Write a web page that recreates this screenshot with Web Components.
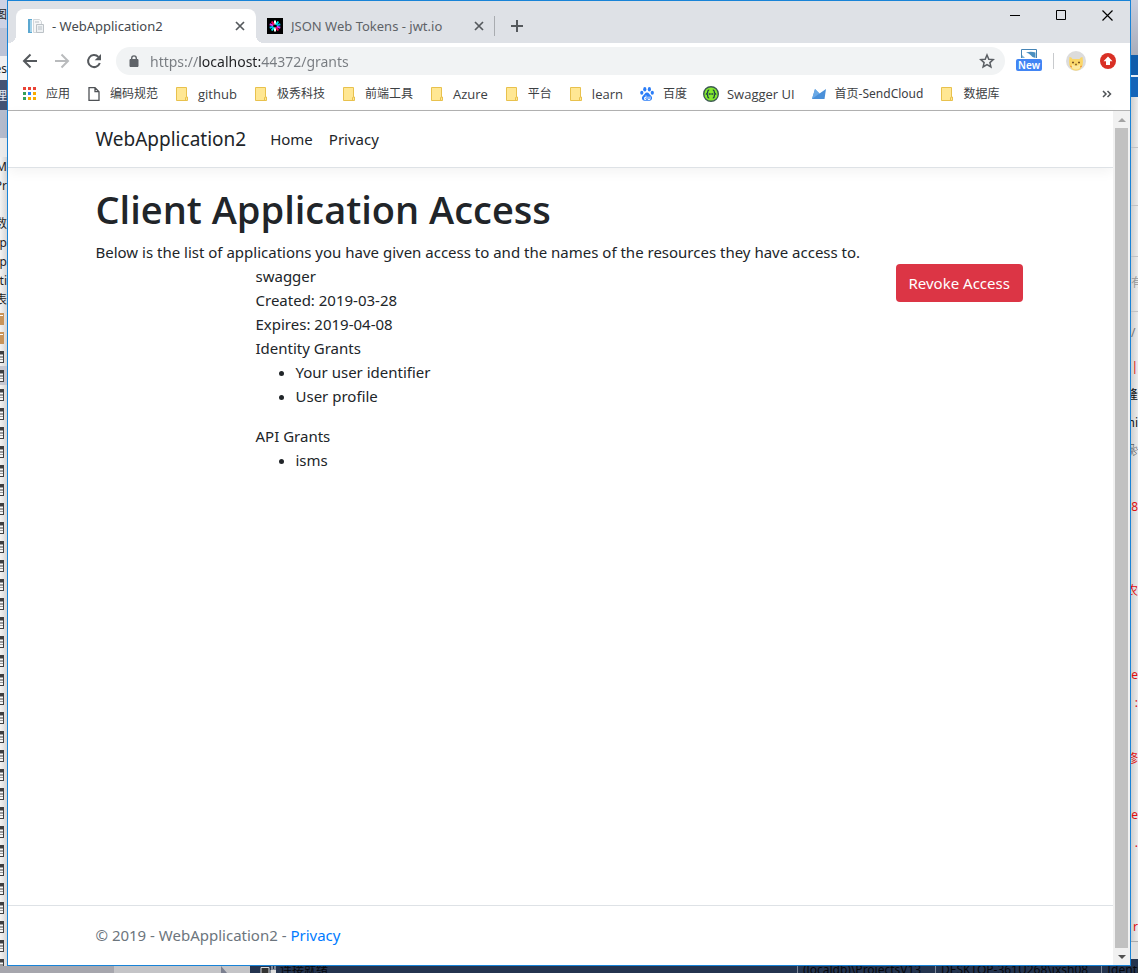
<!DOCTYPE html>
<html lang="en">
<head>
<meta charset="utf-8">
<title>- WebApplication2</title>
<style>
  html, body { margin: 0; }
  body {
    font-family: "Noto Sans", "Noto Sans CJK SC", sans-serif;
    color: #212529;
  }
</style>
</head>
<body>
<desk-top>
  <side-tree slot="left"></side-tree>
  <browser-window>
    <tab-strip slot="tabs">
      <browser-tab icon="doc" active>- WebApplication2</browser-tab>
      <browser-tab icon="jwt">JSON Web Tokens - jwt.io</browser-tab>
    </tab-strip>
    <address-bar slot="address"></address-bar>
    <bookmark-bar slot="bookmarks">
      <book-mark icon="apps">应用</book-mark>
      <book-mark icon="page">编码规范</book-mark>
      <book-mark icon="folder" latin>github</book-mark>
      <book-mark icon="folder">极秀科技</book-mark>
      <book-mark icon="folder">前端工具</book-mark>
      <book-mark icon="folder" latin>Azure</book-mark>
      <book-mark icon="folder">平台</book-mark>
      <book-mark icon="folder" latin>learn</book-mark>
      <book-mark icon="paw">百度</book-mark>
      <book-mark icon="swagger" latin>Swagger UI</book-mark>
      <book-mark icon="send">首页-SendCloud</book-mark>
      <book-mark icon="folder">数据库</book-mark>
    </bookmark-bar>
    <site-nav></site-nav>
    <client-access>
      <grant-card name="swagger" created="2019-03-28" expires="2019-04-08">
        <grant-list label="Identity Grants" items="Your user identifier|User profile"></grant-list>
        <grant-list label="API Grants" items="isms"></grant-list>
      </grant-card>
    </client-access>
    <site-footer></site-footer>
  </browser-window>
  <side-editor slot="right"></side-editor>
  <status-strip slot="bottom"></status-strip>
</desk-top>

<script>
const ICONS = {
  doc: `<svg width="16" height="16" viewBox="0 0 16 16"><path d="M0 1h4v14H0z" fill="#5ba7d0"/><path d="M2 2h2v12H2z" fill="#a5d3ea"/><path d="M5.500 1.500h6l2 2v11h-8z" fill="#f6f7f8" stroke="#d3d7da"/><path d="M8.500 6.500h7v8h-7z" fill="#eef1f3" stroke="#bcc2c7"/><path d="M7 4h4M10 9h4M10 11h4" stroke="#b9c0c6"/></svg>`,
  jwt: `<svg width="16" height="16" viewBox="0 0 16 16"><path d="M0 0h16v16H0z" fill="#000"/><g stroke-width="2"><path d="M8 2.500v4" stroke="#fff"/><path d="M8 9.500v4" stroke="#fff"/><path d="M11.300 3.500 9 6.600" stroke="#00f2e6"/><path d="M4.700 12.500 7 9.400" stroke="#00f2e6"/><path d="M13.300 6.300 9.700 7.400" stroke="#00b9f1"/><path d="M2.700 9.700 6.300 8.600" stroke="#00b9f1"/><path d="M13.300 9.700 9.700 8.600" stroke="#d63aff"/><path d="M2.700 6.300 6.300 7.400" stroke="#d63aff"/><path d="M11.300 12.500 9 9.400" stroke="#fb015b"/><path d="M4.700 3.500 7 6.600" stroke="#fb015b"/></g></svg>`,
  close: `<svg width="10" height="10" viewBox="0 0 10 10"><path d="M1 1l8 8M9 1l-8 8" stroke="#55595d" stroke-width="1.700"/></svg>`,
  plus: `<svg width="12" height="12" viewBox="0 0 12 12"><path d="M6 0v12M0 6h12" stroke="#55595d" stroke-width="2"/></svg>`,
  min: `<svg width="11" height="11" viewBox="0 0 11 11"><path d="M0 5.500h10" stroke="#000"/></svg>`,
  max: `<svg width="11" height="11" viewBox="0 0 11 11"><path d="M.500.500h9v9h-9z" fill="none" stroke="#000"/></svg>`,
  quit: `<svg width="11" height="11" viewBox="0 0 11 11"><path d="M.500.500l10 10M10.500.500l-10 10" stroke="#000" stroke-width="1.200"/></svg>`,
  back: `<svg width="16" height="16" viewBox="0 0 16 16"><path d="M15 8H2.500M8.500 1.500 2 8l6.500 6.500" fill="none" stroke="#55595d" stroke-width="2"/></svg>`,
  forward: `<svg width="16" height="16" viewBox="0 0 16 16"><path d="M1 8h12.500M7.500 1.500 14 8l-6.500 6.500" fill="none" stroke="#b9bbbd" stroke-width="2"/></svg>`,
  reload: `<svg width="16" height="16" viewBox="0 0 16 16"><path d="M13.800 10A6 6 0 1 1 12.400 3.900" fill="none" stroke="#55595d" stroke-width="2"/><path d="M15 1v6.300H8.700z" fill="#55595d"/></svg>`,
  lock: `<svg width="10" height="12" viewBox="0 0 10 12"><path d="M1 4.500h8v7H1z" fill="#5f6368" stroke="#5f6368" stroke-linejoin="round"/><path d="M2.700 5V3.200a2.300 2.300 0 0 1 4.600 0V5" fill="none" stroke="#5f6368" stroke-width="1.400"/></svg>`,
  star: `<svg width="16" height="16" viewBox="0 0 16 16"><path d="M8 2l1.800 4.200 4.500.4-3.400 3 1 4.400L8 11.600 4.100 14l1-4.400-3.400-3 4.500-.4z" fill="none" stroke="#5a5e63" stroke-width="1.500"/></svg>`,
  ext: `<svg width="16" height="12" viewBox="0 0 16 12"><path d="M.500 9V.500h15V9" fill="#fff" stroke="#4584b6"/><path d="M5 3.500Q10 2 14.500 3.500V9Q11 8.500 9.500 6 8 4 5 3.500z" fill="#4a8fc0"/><path d="M1 6l3 3H1z" fill="#7fb2d4"/></svg>`,
  cat: `<svg width="20" height="20" viewBox="0 0 20 20"><circle cx="10" cy="10" r="10" fill="#dcdcdc"/><path d="M3.500 6q2 0 3 2h7q1-2 3-2 .8 4 .2 8-1.700 5.500-6.700 5.500T3.300 14Q2.700 10 3.500 6z" fill="#fbd769"/><path d="M6 13q4 4 8 0v4q-4 3-8 0z" fill="#fde9a0"/><path d="M6 11.500h2M12 11.500h2M9.200 13.500h1.600" stroke="#7b5524" stroke-width="1.300"/><path d="M4 15l2 1M16 15l-2 1" stroke="#f08f3c"/></svg>`,
  update: `<svg width="16" height="16" viewBox="0 0 16 16"><circle cx="8" cy="8" r="8" fill="#d93025"/><path d="M8 3.500l4.500 4.700H10V12H6V8.200H3.500z" fill="#fff"/></svg>`,
  apps: `<svg width="14" height="14" viewBox="0 0 14 14"><path d="M0 0h3v3H0zM5 0h3v3H5zM10 0h3v3h-3z" fill="#ea4335"/><path d="M0 5h3v3H0zM0 10h3v3H0z" fill="#34a05a"/><path d="M5 5h3v3H5z" fill="#2a83f5"/><path d="M5 10h3v3H5zM10 5h3v3h-3zM10 10h3v3h-3z" fill="#f9ab00"/></svg>`,
  page: `<svg width="12" height="14" viewBox="0 0 12 14"><path d="M1 .700h6L11 4.700v8.600H1z M7 .700v4h4" fill="#fff" stroke="#4e5155" stroke-width="1.300"/></svg>`,
  folder: `<svg width="14" height="14" viewBox="0 0 14 14"><path d="M1.500.500h10v9.500h1v3.500h-11z" fill="#ffe793" stroke="#e8c14d"/><path d="M10.500 13.500V10.500h1" fill="none" stroke="#e8c14d"/></svg>`,
  paw: `<svg width="14" height="14" viewBox="0 0 14 14"><g fill="#2b7df7"><ellipse cx="4.800" cy="2.300" rx="1.600" ry="2.200"/><ellipse cx="9.400" cy="2.300" rx="1.600" ry="2.200"/><ellipse cx="1.800" cy="5.800" rx="1.600" ry="2"/><ellipse cx="12.300" cy="5.800" rx="1.600" ry="2"/><path d="M7 5.500c2 0 2.500 2 4 3.300 2 1.700 1 5-1.500 5H4.500c-2.500 0-3.500-3.300-1.500-5C4.500 7.500 5 5.500 7 5.500z"/></g><path d="M6 8.500v4H4.500v-2H6M8 9.500v3h2v-3" fill="none" stroke="#fff" stroke-width=".9"/></svg>`,
  swagger: `<svg width="16" height="16" viewBox="0 0 16 16"><circle cx="8" cy="8" r="7.300" fill="#85ea2d" stroke="#3c5a52" stroke-width="1.400"/><path d="M6.200 4.200Q4.800 4 4.800 5.500T3.500 8q1.300.5 1.300 2.300t1.400 1.500M9.800 4.200q1.400-.2 1.400 1.300T12.500 8q-1.300.5-1.300 2.300t-1.400 1.500" fill="none" stroke="#173647" stroke-width="1.200"/><path d="M5.700 8h4.600" stroke="#173647" stroke-width="1.400" stroke-dasharray="1.200 .5"/></svg>`,
  send: `<svg width="14" height="12" viewBox="0 0 14 12"><path d="M3 1l4.500 4.500L14 1l-1.500 10H0z" fill="#4a90d9"/><path d="M3 1l4.500 4.500L0 11z" fill="#6aa9e6"/></svg>`,
  up: `<svg width="8" height="4" viewBox="0 0 8 4"><path d="M4 0l4 4H0z" fill="#a3a3a3"/></svg>`,
  down: `<svg width="8" height="4" viewBox="0 0 8 4"><path d="M0 0h8L4 4z" fill="#505050"/></svg>`,
  crate: `<svg width="4" height="12" viewBox="0 0 4 12"><path d="M0 0h4v12H0z" fill="#c8945a"/><path d="M0 2.500h3" stroke="#fff"/></svg>`,
  table: `<svg width="4" height="12" viewBox="0 0 4 12"><path d="M0 0h4v12H0z" fill="#3f3f41"/><path d="M0 4.500h3M0 7.500h3M0 10h3" stroke="#f6f6f6" stroke-width="2"/></svg>`,
  play: `<svg width="6" height="7" viewBox="0 0 6 7"><path d="M0 0l6 7H0z" fill="#7b8090"/></svg>`,
  link: `<svg width="16" height="7" viewBox="0 0 16 7"><path d="M1 7V1.500h8V7" fill="#333" stroke="#ddd"/><path d="M12 0v3M15 0v3M11 4h5v3h-5z" fill="#ddd" stroke="#ddd"/></svg>`
};

const base = `<style>
  *, :host { box-sizing: border-box; }
  button { margin: 0; padding: 0; border: 0; background: none; font: inherit; color: inherit; display: flex; align-items: center; justify-content: center; }
  svg { display: block; }
  a { text-decoration: none; color: inherit; }
</style>`;

function define(name, markup) {
  customElements.define(name, class extends HTMLElement {
    constructor() {
      super();
      this.attachShadow({ mode: "open" });
    }
    connectedCallback() {
      const t = document.createElement("template");
      t.innerHTML = base + (typeof markup === "function" ? markup(this) : markup);
      this.shadowRoot.replaceChildren(t.content.cloneNode(true));
    }
  });
}

define("desk-top", `<style>
  :host { display: grid; grid-template-columns: 7px minmax(0, 1fr) 7px; grid-template-rows: 1fr 7px; min-height: 100vh; }
  .bottom { grid-column: 1 / -1; overflow: hidden; }
</style>
<slot name="left"></slot><slot></slot><slot name="right"></slot><div class="bottom"><slot name="bottom"></slot></div>`);

/* Edge of the object explorer that shows to the left of the browser */
define("side-tree", () => {
  const labels = ["M", "Pr", "", "数", "p", "p", "ti", "表"];
  const rows = labels.map(t => `<li>${t}</li>`).join("")
    + `<li>${ICONS.crate}</li>`.repeat(2)
    + `<li>${ICONS.table}</li><li class="on">${ICONS.table}</li>`
    + `<li>${ICONS.table}</li>`.repeat(31);
  return `<style>
    :host { display: flex; flex-direction: column; overflow: hidden; height: 0; min-height: 100%; background: linear-gradient(90deg, #f3f3f3, #d6d6d6); font-size: 12px; line-height: 19px; color: #1e1e1e; }
    div, li { flex: none; display: flex; align-items: center; justify-content: flex-end; overflow: hidden; }
    .a { height: 28px; background: #cdd2e4; }
    .b { height: 28px; background: #bcc3d6; }
    .c { height: 24px; background: #f0f0f2; }
    .d { height: 30px; background: #445374; color: #e6e9f2; }
    .e { height: 47px; background: linear-gradient(#b5bccd 28px, #ececec 28px); }
    ul { list-style: none; margin: 0; padding: 0; }
    li { height: 19px; }
    li svg { margin-right: 3px; }
    .on { background: #c5c6d0; }
  </style>
  <div class="a">图</div><div class="b"></div><div class="c">es</div><div class="d">理</div><div class="e"></div><ul>${rows}</ul>`;
});

/* Edge of the page that shows to the right of the browser */
define("side-editor", () => {
  const lines = [["||", "r"], ["隆", "k"], ["hi", "k"], ["❀", "k"], [""], ["18", "r"], [""], [""], ["农", "r"], [""], [""],
    ["e", "r"], [":", "r"], [""], ["修", "r"], [""], ["e", "r"], [".", "r"], [""], [""], ["r", "r"]];
  return `<style>
    :host { display: flex; flex-direction: column; overflow: hidden; height: 0; min-height: 100%; background: #24344f; font-size: 12px; line-height: 28px; }
    div, li { flex: none; overflow: hidden; background: linear-gradient(90deg, #cfcfcf, #ececec); }
    .a { height: 55px; background: linear-gradient(#c8cddd, #a9adba); }
    .b { height: 42px; background: linear-gradient(#0f5cab 20px, #e8eef5 20px, #e8eef5 22px, #1464b8 22px); }
    .c { height: 51px; border-bottom: 1px solid #c2c2c4; }
    .d { height: 58px; border-bottom: 1px solid #c2c2c4; }
    .e { height: 51px; border-bottom: 1px solid #c2c2c4; }
    .f { height: 55px; border-bottom: 1px solid #c2c2c4; color: #999; line-height: 51px; }
    .g { height: 41px; color: #777; line-height: 41px; }
    .h { height: 18px; background: #dedede; border-top: 1px solid #aaa; }
    ul { list-style: none; margin: 0; padding: 0; }
    li { height: 28px; display: flex; justify-content: flex-end; }
    .r { color: #e01010; } .k { color: #111; }
  </style>
  <div class="a"></div><div class="b"></div><div class="c"></div><div class="d"></div><div class="e"></div><div class="f">有</div><div class="g">/</div>
  <ul>${lines.map(([t, c]) => `<li class="${c || ""}">${t}</li>`).join("")}</ul><div class="h"></div>`;
});

define("status-strip", `<style>
  :host { display: flex; height: 7px; font-size: 12px; line-height: 8px; color: #05070c; background: #24344f; white-space: nowrap; }
  div { overflow: hidden; display: flex; height: 7px; }
  .thumb { width: 114px; background: #a6a6ad; }
  .track { width: 136px; background: #c4c4c7; padding-left: 107px; }
  .state { flex: 1; gap: 4px; padding-left: 10px; }
  .cell { border-left: 1px solid #7d8797; padding-left: 5px; }
  .x { width: 138px; } .y { width: 166px; } .z { width: 37px; }
</style>
<div class="thumb"></div><div class="track">${ICONS.play}</div>
<div class="state">${ICONS.link}<span>连接就绪</span></div>
<div class="cell x">(localdb)\\ProjectsV13</div><div class="cell y">DESKTOP-361U268\\jxsh08</div><div class="cell z">Identi</div>`);

define("browser-window", `<style>
  :host { display: flex; flex-direction: column; border: 1px solid #1883d7; background: #fff; }
  .view { flex: 1; display: flex; border-top: 1px solid #b3b3b3; }
  .page { flex: 1; min-width: 0; display: flex; flex-direction: column; }
</style>
<slot name="tabs"></slot><slot name="address"></slot><slot name="bookmarks"></slot>
<div class="view"><div class="page"><slot></slot></div><scroll-bar></scroll-bar></div>`);

define("tab-strip", `<style>
  :host { display: flex; height: 42px; background: #dee1e6; padding-left: 8px; }
  .tabs { display: flex; align-items: flex-end; }
  .new { width: 44px; height: 34px; align-self: flex-end; }
  .controls { margin-left: auto; display: flex; }
  .controls button { width: 46px; height: 28px; }
</style>
<div class="tabs"><slot></slot></div>
<button class="new" aria-label="New tab">${ICONS.plus}</button>
<div class="controls"><button aria-label="Minimize">${ICONS.min}</button><button aria-label="Maximize">${ICONS.max}</button><button aria-label="Close">${ICONS.quit}</button></div>`);

define("browser-tab", el => `<style>
  :host { display: flex; align-items: center; width: 239px; height: 34px; padding: 0 10px 0 11px; gap: 8px; font-size: 13px; color: #5f6368; position: relative; }
  :host([active]) { width: 240px; padding-left: 12px; background: #fff; border-radius: 8px 8px 0 0; color: #45494d; }
  :host([active])::before, :host([active])::after { content: ""; position: absolute; bottom: 0; width: 8px; height: 8px; }
  :host([active])::before { left: -8px; background: radial-gradient(circle at 0 0, transparent 8px, #fff 8px); }
  :host([active])::after { right: -8px; background: radial-gradient(circle at 100% 0, transparent 8px, #fff 8px); }
  :host(:not([active])) { background: linear-gradient(#a9acb0, #a9acb0) right center / 1px 20px no-repeat; }
  span { flex: 1; white-space: nowrap; overflow: hidden; }
  button { width: 12px; height: 16px; }
</style>${ICONS[el.getAttribute("icon")]}<span><slot></slot></span><button aria-label="Close tab">${ICONS.close}</button>`);

define("address-bar", `<style>
  :host { display: flex; align-items: center; height: 36px; padding-left: 6px; }
  .nav { width: 32px; height: 32px; }
  form { flex: 1; display: flex; align-items: center; height: 28px; border-radius: 14px; background: #f1f3f4; margin: 0 10px 0 6px; padding: 0 10px 0 13px; gap: 11px; }
  input { flex: 1; min-width: 0; border: 0; outline: 0; padding: 0; height: 24px; font: inherit; font-size: 14px; color: #777b80;
    background: linear-gradient(90deg, #777b80 49px, #202124 49px, #202124 111px, #777b80 111px); background-clip: text; -webkit-background-clip: text; -webkit-text-fill-color: transparent; }
  .ext { flex-direction: column; width: 28px; height: 24px; justify-content: flex-start; }
  .ext span { width: 26px; height: 12px; margin-top: -2px; border-radius: 2px; background: #4285f4; color: #fff; font-size: 10px; font-weight: 600; line-height: 12px; }
  .rule { width: 1px; height: 16px; background: #c8cacd; margin: 0 12px 0 10px; }
  .last { margin: 0 14px 0 14px; }
</style>
<button class="nav" aria-label="Back">${ICONS.back}</button><button class="nav" aria-label="Forward">${ICONS.forward}</button><button class="nav" aria-label="Reload">${ICONS.reload}</button>
<form>${ICONS.lock}<input type="text" aria-label="Address" value="https://localhost:44372/grants"><button type="button" aria-label="Bookmark this page">${ICONS.star}</button></form>
<button class="ext" aria-label="Extension">${ICONS.ext}<span>New</span></button><div class="rule"></div>
<button aria-label="Profile">${ICONS.cat}</button><button class="last" aria-label="Update">${ICONS.update}</button>`);

define("bookmark-bar", `<style>
  :host { display: flex; align-items: center; gap: 16px; height: 31px; padding: 0 18px 2px 14px; }
  button { margin-left: auto; }
</style><slot></slot><button aria-label="More bookmarks"><svg width="10" height="8" viewBox="0 0 10 8"><path d="M1 1l3 3-3 3M5.500 1l3 3-3 3" fill="none" stroke="#505458" stroke-width="1.500"/></svg></button>`);

define("book-mark", el => `<style>
  :host { display: block; font-size: 12px; line-height: 16px; color: #3c4043; white-space: nowrap; }
  :host([latin]) { font-family: "Open Sans", sans-serif; font-size: 13px; }
  a { display: flex; align-items: center; gap: 8px; }
  i { width: 16px; display: flex; justify-content: center; }
</style><a href="#"><i>${ICONS[el.getAttribute("icon")]}</i><slot></slot></a>`);

define("scroll-bar", `<style>
  :host { display: flex; flex-direction: column; width: 17px; background: #f1f1f1; }
  button { height: 17px; }
  .thumb { flex: 1; margin: 0 2px; background: #c1c1c1; }
</style><button aria-label="Scroll up">${ICONS.up}</button><div class="thumb"></div><button aria-label="Scroll down">${ICONS.down}</button>`);

define("site-nav", `<style>
  :host { display: block; border-bottom: 1px solid #dee2e6; box-shadow: 0 4px 12px rgba(0, 0, 0, .05); }
  nav { display: flex; align-items: center; max-width: 960px; height: 56px; margin: 0 auto; padding: 0 15px; font-size: 15px; }
  .brand { font-size: 19px; margin-right: 16px; }
  .item { padding: 8px; }
</style><nav><a class="brand" href="#">WebApplication2</a><a class="item" href="#">Home</a><a class="item" href="#">Privacy</a></nav>`);

define("client-access", `<style>
  :host { display: block; flex: 1; width: 100%; max-width: 960px; margin: 0 auto; padding: 16px 15px; font-size: 15px; line-height: 24px; }
  h1 { margin: 0 0 6px; font-family: "Open Sans", sans-serif; font-size: 38px; font-weight: 600; line-height: 50px; }
  p { margin: 0; }
</style><h1>Client Application Access</h1><p>Below is the list of applications you have given access to and the names of the resources they have access to.</p><slot></slot>`);

define("grant-card", el => `<style>
  :host { display: grid; grid-template-columns: 2fr 8fr 2fr; margin: 0 -15px; }
  .info { grid-column: 2; padding: 0 15px; }
  .act { padding: 0 15px; }
  button { height: 38px; padding: 0 13px; border-radius: 4px; background: #dc3545; color: #fff; white-space: nowrap; }
</style>
<div class="info"><div>${el.getAttribute("name")}</div><div>Created: ${el.getAttribute("created")}</div><div>Expires: ${el.getAttribute("expires")}</div><slot></slot></div>
<div class="act"><button>Revoke Access</button></div>`);

define("grant-list", el => `<style>
  :host { display: block; }
  ul { margin: 0 0 16px; padding-left: 40px; }
</style><div>${el.getAttribute("label")}</div><ul>${el.getAttribute("items").split("|").map(i => `<li>${i}</li>`).join("")}</ul>`);

define("site-footer", `<style>
  :host { display: block; border-top: 1px solid #dee2e6; font-size: 15px; line-height: 59px; color: #6c757d; }
  div { max-width: 960px; margin: 0 auto; padding: 0 15px; }
  a { color: #007bff; }
</style><div>© 2019 - WebApplication2 - <a href="#">Privacy</a></div>`);
</script>
</body>
</html>
